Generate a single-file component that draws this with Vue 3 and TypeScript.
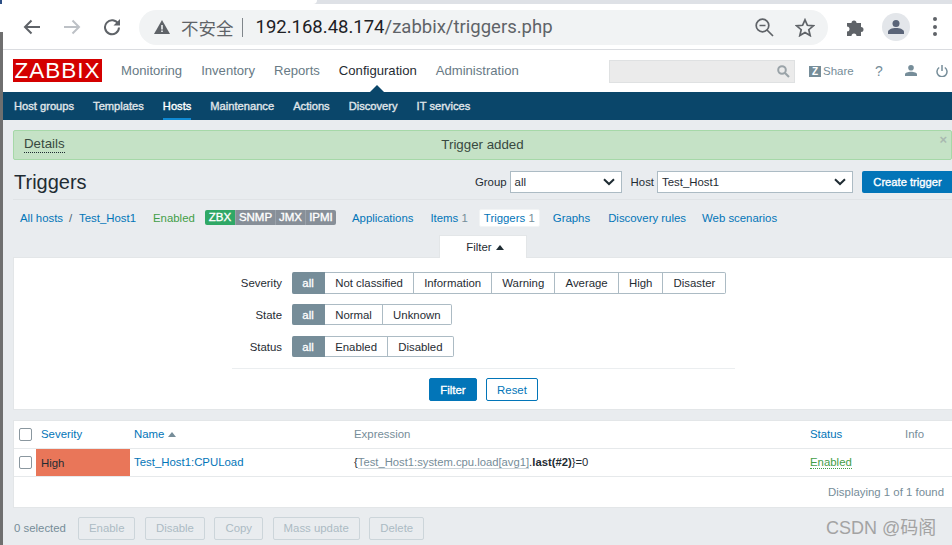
<script setup lang="ts">
const mainNav = ['Monitoring', 'Inventory', 'Reports', 'Configuration', 'Administration']
const subNav = ['Host groups', 'Templates', 'Hosts', 'Maintenance', 'Actions', 'Discovery', 'IT services']
const filters = [
  { label: 'Severity', cls: 'first', options: ['Not classified', 'Information', 'Warning', 'Average', 'High', 'Disaster'] },
  { label: 'State', cls: '', options: ['Normal', 'Unknown'] },
  { label: 'Status', cls: '', options: ['Enabled', 'Disabled'] },
]
const actions = ['Enable', 'Disable', 'Copy', 'Mass update', 'Delete']
</script>

<template>
  <div class="screen">
    <div class="tabstrip"><div class="tabstrip-blue"></div><div class="tabstrip-tab"></div></div>
    <div class="browser">
      <div class="toolbar">
        <svg class="ic back" viewBox="0 0 18 16" width="18" height="16"><path d="M17 8H2M8.5 1.5 2 8l6.5 6.5" fill="none" stroke="#5f6368" stroke-width="2"/></svg>
        <svg class="ic fwd" viewBox="0 0 18 16" width="18" height="16"><path d="M1 8h15M9.5 1.5 16 8l-6.5 6.5" fill="none" stroke="#bdc1c6" stroke-width="2"/></svg>
        <svg class="ic reload" viewBox="0 0 18 18" width="18" height="18"><path d="M15.2 6A7 7 0 1 0 16 9.5" fill="none" stroke="#5f6368" stroke-width="2"/><path d="M17 1v6.5h-6.500z" fill="#5f6368"/></svg>
        <div class="omnibox">
          <svg class="warn" viewBox="0 0 16 14" width="16" height="14"><path d="M8 0 16 14H0z" fill="#5f6368"/><path d="M7.200 5h1.600v4.500H7.200zM7.200 10.500h1.600V12H7.200z" fill="#f1f3f4"/></svg>
          <span class="insecure">不安全</span>
          <span class="pipe"></span>
          <span class="url"><span class="host">192.168.48.174</span>/zabbix/triggers.php</span>
          <svg class="zoomout" viewBox="0 0 19 19" width="19" height="19"><circle cx="7.500" cy="7.500" r="6.300" fill="none" stroke="#5f6368" stroke-width="1.700"/><path d="M4.500 7.500h6M12 12l6 6" stroke="#5f6368" stroke-width="1.700"/></svg>
          <svg class="star" viewBox="0 0 20 19" width="20" height="19"><path d="M10 1.800l2.400 5.500 6 .5-4.600 3.900 1.400 5.900-5.200-3.100-5.200 3.100 1.400-5.900L1.600 7.800l6-.5z" fill="none" stroke="#5f6368" stroke-width="1.700"/></svg>
        </div>
        <svg class="puzzle" viewBox="0 0 20 20" width="20" height="20"><path d="M1 6h4.500a2.500 2.500 0 1 1 5 0H15v4a2.500 2.500 0 1 1 0 5v4h-4.500a2.500 2.500 0 0 0-5 0H1v-4.500a2.500 2.500 0 0 0 0-5z" fill="#5f6368"/></svg>
        <div class="avatar"><svg viewBox="0 0 16 14" width="16" height="14"><circle cx="8" cy="3.500" r="3.500" fill="#5a6478"/><path d="M0 14v-2c0-2.500 4-4 8-4s8 1.500 8 4v2z" fill="#5a6478"/></svg></div>
        <div class="dots"><i></i><i></i><i></i></div>
      </div>
    </div>

    <header class="topbar">
      <div class="logo">ZABBIX</div>
      <nav class="mainnav">
        <span v-for="n in mainNav" :key="n" :class="{ active: n === 'Configuration' }">{{ n }}</span>
      </nav>
      <div class="search">
        <svg viewBox="0 0 13 13" width="13" height="13"><circle cx="5" cy="5" r="3.800" fill="none" stroke="#9aa3a8" stroke-width="2"/><path d="M8 8l4 4" stroke="#9aa3a8" stroke-width="2.200"/></svg>
      </div>
      <div class="share"><span class="zbox">Z</span>Share</div>
      <span class="help">?</span>
      <svg class="person" viewBox="0 0 12 11" width="12" height="11"><circle cx="6" cy="2.800" r="2.800" fill="#768d99"/><path d="M0 11V9.500C0 7.800 3 6.800 6 6.800s6 1 6 2.700V11z" fill="#768d99"/></svg>
      <svg class="power" viewBox="0 0 12 12" width="12" height="12"><path d="M3.200 2.500a5 5 0 1 0 5.600 0" fill="none" stroke="#768d99" stroke-width="1.500"/><path d="M6 0v6" stroke="#768d99" stroke-width="1.500"/></svg>
      <span class="caret"></span>
    </header>
    <nav class="subnav">
      <span v-for="n in subNav" :key="n" :class="{ current: n === 'Hosts' }">{{ n }}</span>
    </nav>

    <main class="page">
      <div class="message">
        <span class="details">Details</span>
        <span class="msg-text">Trigger added</span>
        <span class="close">×</span>
      </div>

      <div class="titlebar">
        <h1>Triggers</h1>
        <div class="controls">
          <label>Group</label>
          <div class="select group">all<svg viewBox="0 0 12 8" width="12" height="8"><path d="M1 1.200 6 6l5-4.800" fill="none" stroke="#1f2c33" stroke-width="2"/></svg></div>
          <label class="hostlabel">Host</label>
          <div class="select hostsel">Test_Host1<svg viewBox="0 0 12 8" width="12" height="8"><path d="M1 1.200 6 6l5-4.800" fill="none" stroke="#1f2c33" stroke-width="2"/></svg></div>
          <button class="create">Create trigger</button>
        </div>
      </div>

      <div class="hostnav">
        <a class="allhosts">All hosts</a><span class="slash">/</span><a class="hostname">Test_Host1</a>
        <span class="enabled">Enabled</span>
        <div class="badges"><b class="zbx">ZBX</b><b class="snmp">SNMP</b><b class="jmx">JMX</b><b class="ipmi">IPMI</b></div>
        <a class="l-apps">Applications</a>
        <a class="l-items">Items <em>1</em></a>
        <a class="l-trig">Triggers <em>1</em></a>
        <a class="l-graphs">Graphs</a>
        <a class="l-disc">Discovery rules</a>
        <a class="l-web">Web scenarios</a>
      </div>

      <div class="filter-tab-row"><div class="filter-tab">Filter <span class="tri"></span></div></div>
      <section class="filter">
        <div v-for="f in filters" :key="f.label" class="frow" :class="f.cls">
          <span class="flabel">{{ f.label }}</span>
          <div class="seg">
            <span class="on">all</span>
            <span v-for="o in f.options" :key="o">{{ o }}</span>
          </div>
        </div>
        <hr />
        <div class="fbtns">
          <button class="primary">Filter</button>
          <button class="ghost">Reset</button>
        </div>
      </section>

      <section class="list">
        <div class="row head">
          <span class="cb"><i></i></span>
          <a class="c-sev">Severity</a>
          <a class="c-name">Name <span class="sort"></span></a>
          <span class="c-expr">Expression</span>
          <a class="c-status">Status</a>
          <span class="c-info">Info</span>
        </div>
        <div class="row body">
          <span class="cb"><i></i></span>
          <span class="c-sev high">High</span>
          <a class="c-name">Test_Host1:CPULoad</a>
          <span class="c-expr val">{<u>Test_Host1:system.cpu.load[avg1]</u>.<b>last(#2)</b>}=0</span>
          <span class="c-status en">Enabled</span>
          <span class="c-info"></span>
        </div>
        <div class="found">Displaying 1 of 1 found</div>
      </section>

      <div class="bulk">
        <span class="sel">0 selected</span>
        <button v-for="a in actions" :key="a">{{ a }}</button>
      </div>
    </main>

    <div class="watermark">CSDN @码阁</div>
    <div class="leftedge"></div>
  </div>
</template>

<style>
html, body { margin: 0; overflow: hidden; }
</style>

<style scoped>
.screen { position: relative; width: 952px; height: 545px; overflow: hidden; background: #e9ecef; font-family: "Liberation Sans", Arial, sans-serif; font-size: 11.400px; color: #1f2c33; }
a { color: #0275b8; }
.leftedge { position: absolute; left: 0; top: 32px; bottom: 0; width: 3px; background: #6f6f6f; }
.tabstrip { height: 4px; background: #dee1e6; display: flex; }
.tabstrip-blue { width: 2px; background: #2d4f85; }
.tabstrip-tab { width: 315px; background: #fff; border-bottom-right-radius: 6px; }
.browser { background: #fff; height: 45px; border-bottom: 1px solid #dadce0; }
.toolbar { display: flex; align-items: center; height: 45px; position: relative; }
.ic.back { margin-left: 23px; }
.ic.fwd { margin-left: 22px; }
.ic.reload { margin-left: 22px; }
.omnibox { margin-left: 18px; width: 689px; height: 35px; margin-top: 1px; background: #f1f3f4; border-radius: 18px; display: flex; align-items: center; }
.warn { margin-left: 15px; }
.insecure { margin-left: 11px; font-family: "Noto Sans CJK SC", sans-serif; font-size: 17.500px; color: #5f6368; }
.pipe { width: 1px; height: 19px; background: #80868b; margin-left: 8px; }
.url { margin-left: 13px; font-family: "Roboto", "Liberation Sans", sans-serif; font-size: 18.500px; color: #5f6368; flex: 1; }
.host { color: #202124; }
.zoomout { margin-right: 21px; }
.star { margin-right: 13px; }
.puzzle { margin-left: 18px; }
.avatar { width: 28px; height: 28px; border-radius: 50%; background: #e3e6ea; margin-left: 16px; display: flex; align-items: center; justify-content: center; }
.dots { margin-left: 23px; display: flex; flex-direction: column; gap: 3.500px; }
.dots i { width: 4px; height: 4px; border-radius: 50%; background: #5f6368; display: block; }

.topbar { height: 42px; background: #fff; display: flex; align-items: center; position: relative; }
.logo { margin-left: 13px; width: 89px; height: 23px; background: #d40000; color: #fff; font-size: 22.500px; line-height: 24px; text-align: center; letter-spacing: 1px; margin-top: -1px; }
.mainnav { display: flex; gap: 19px; margin-left: 19px; font-size: 13.100px; color: #687a85; margin-top: -2px; }
.mainnav .active { color: #1f2c33; }
.search { position: absolute; left: 609px; top: 10px; width: 184px; height: 21px; box-sizing: content-box; background: #ebebeb; border: 1px solid #dfe1e2; display: flex; align-items: center; justify-content: flex-end; }
.search svg { margin-right: 4px; }
.share { position: absolute; left: 809px; top: 15px; display: flex; align-items: center; color: #768d99; font-size: 11.500px; }
.zbox { width: 12px; height: 11px; background: #768d99; color: #fff; font-weight: bold; font-size: 10px; line-height: 11px; text-align: center; margin-right: 2px; }
.help { position: absolute; left: 875px; top: 13px; color: #768d99; font-size: 14px; }
.person { position: absolute; left: 905px; top: 15px; }
.power { position: absolute; left: 936px; top: 15px; }
.caret { position: absolute; left: 370px; bottom: 0; width: 0; height: 0; border-left: 7px solid transparent; border-right: 7px solid transparent; border-bottom: 7px solid #0a466a; }

.subnav { height: 28px; background: #0a466a; display: flex; gap: 19px; padding-left: 14px; align-items: stretch; color: #e0e6ea; font-size: 11.150px; -webkit-text-stroke: 0.35px currentColor; line-height: 29px; }
.subnav span { box-sizing: border-box; }
.subnav .current { color: #fff; border-bottom: 2px solid #0f8ad4; }

.page { height: 425px; padding-left: 13px; padding-top: 10px; box-sizing: border-box; }
.message { height: 30px; box-sizing: border-box; background: #c5e2c6; border: 1px solid #a6d8a8; border-radius: 2px; position: relative; display: flex; align-items: center; justify-content: center; font-size: 13.300px; color: #38493f; padding-bottom: 2px; }
.details { position: absolute; left: 10px; top: 4px; line-height: 17px; border-bottom: 1px dotted #1f2c33; }
.close { position: absolute; right: 4px; top: 0; color: #a9b9b0; font-size: 13px; line-height: 17px; font-weight: bold; }

.titlebar { height: 40px; display: flex; align-items: center; justify-content: space-between; border-bottom: 1px solid #e0e3e6; box-sizing: border-box; padding-top: 4px; }
h1 { margin: 2px 0 0 1px; font-weight: normal; font-size: 20px; color: #1f2c33; }
.controls { display: flex; align-items: center; }
.controls label { margin-right: 3px; }
.hostlabel { margin-left: 9px; }
.select { height: 22px; box-sizing: border-box; background: #fff; border: 1px solid #acbbc4; display: flex; align-items: center; justify-content: space-between; padding: 0 6px 0 4px; }
.select.group { width: 112px; }
.select.hostsel { width: 196px; }
.create { margin-left: 9px; width: 90px; height: 22px; border: 0; border-radius: 2px 0 0 2px; background: #0275b8; color: #fff; font: 11.200px "Liberation Sans", Arial, sans-serif; -webkit-text-stroke: 0.35px #fff; padding: 0 0 0 1px; }

.hostnav { height: 35px; display: flex; align-items: center; position: relative; }
.hostnav em { font-style: normal; color: #768d99; }
.allhosts { margin-left: 7px; width: 42px; white-space: nowrap; }
.slash { margin-left: 7px; width: 3px; color: #4b6575; }
.hostname { margin-left: 7px; width: 55px; white-space: nowrap; }
.enabled { margin-left: 19px; width: 41px; color: #429e47; }
.badges { margin-left: 11px; display: flex; width: 131px; height: 15px; border-radius: 2px; overflow: hidden; font-size: 11.500px; line-height: 15px; color: #fff; text-align: center; }
.badges b { background: #878f98; border-left: 1px solid #9aa2aa; box-sizing: border-box; font-weight: normal; -webkit-text-stroke: 0.35px #fff; }
.zbx { width: 30px; background: #2fa866 !important; border: 0 !important; }
.snmp { width: 40px; }
.jmx { width: 30px; }
.ipmi { width: 31px; }
.hostnav a { white-space: nowrap; }
.l-apps { margin-left: 16px; }
.l-items { margin-left: 17px; }
.l-trig { margin-left: 11px; width: 61px; text-align: center; background: #fff; padding: 1px 0; line-height: 14px; border: 1px solid #f2f4f5; border-radius: 2px; box-sizing: border-box; }
.l-graphs { margin-left: 13px; }
.l-disc { margin-left: 18px; }
.l-web { margin-left: 16px; }

.filter-tab-row { height: 22px; padding-left: 426px; }
.filter-tab { width: 88px; height: 23px; box-sizing: border-box; background: #fff; border: 1px solid #e3e6e8; border-bottom: 0; padding-left: 4px; text-align: center; line-height: 23px; position: relative; z-index: 1; }
.tri { display: inline-block; width: 0; height: 0; border-left: 4px solid transparent; border-right: 4px solid transparent; border-bottom: 5px solid #1f2c33; margin-left: 1px; vertical-align: 1px; }

.filter { height: 153px; box-sizing: border-box; background: #fff; border: 1px solid #e3e6e8; border-right: 0; padding-top: 14px; }
.frow { display: flex; align-items: center; height: 21px; margin-bottom: 11px; }
.frow.first { height: 22px; margin-bottom: 10px; }
.flabel { width: 268px; text-align: right; margin-right: 10px; }
.seg { display: flex; height: 100%; border-radius: 2px; }
.seg span { box-sizing: border-box; border: 1px solid #acbbc4; border-left: 0; display: flex; align-items: center; padding: 0 10px 0 10.200px; }
.seg span:last-child { border-radius: 0 2px 2px 0; }
.seg .on { width: 33px; padding: 0; justify-content: center; background: #768d99; border-color: #768d99; color: #fff; border-radius: 2px 0 0 2px; -webkit-text-stroke: 0.3px #fff; }
.filter hr { margin: 0 0 9px 218px; width: 503px; border: 0; border-top: 1px solid #ebeef0; height: 0; }
.fbtns { display: flex; gap: 9px; padding-left: 415px; }
.fbtns button { height: 23px; box-sizing: border-box; border-radius: 2px; font: 11.400px "Liberation Sans", Arial, sans-serif; padding: 0; }
.primary { width: 48px; background: #0275b8; border: 1px solid #0275b8; color: #fff; -webkit-text-stroke: 0.35px #fff; }
.ghost { width: 52px; background: #fff; border: 1px solid #0275b8; color: #0275b8; }

.list { margin-top: 10px; height: 88px; box-sizing: border-box; background: #fff; border: 1px solid #e3e6e8; border-right: 0; }
.row { display: grid; grid-template-columns: 22px 94px 224px 456px 95px 1fr; height: 28px; box-sizing: border-box; border-bottom: 1px solid #e6e9eb; align-items: center; padding-bottom: 1px; }
.row.head { color: #768d99; }
.cb { display: flex; padding-left: 5px; }
.cb i { width: 11px; height: 11px; border: 1px solid #8a979f; border-radius: 2px; background: #fff; display: block; }
.c-sev { padding-left: 5px; }
.c-name { padding-left: 4px; }
.c-status { padding-left: 0; }
.high { background: #e97659; align-self: stretch; margin-bottom: -1px; display: flex; align-items: center; color: #1f2c33; }
.sort { display: inline-block; width: 0; height: 0; border-left: 4px solid transparent; border-right: 4px solid transparent; border-bottom: 5px solid #768d99; vertical-align: 1px; }
.val { font-size: 11.250px; }
.val u { color: #768d99; text-decoration: none; border-bottom: 1px solid #ccd5da; }
.val b { font-weight: bold; }
.en { color: #429e47; justify-self: start; border-bottom: 1px dotted #429e47; }
.found { height: 30px; line-height: 30px; text-align: right; padding-right: 8px; color: #768d99; }

.bulk { height: 37px; display: flex; align-items: center; padding-top: 3px; box-sizing: border-box; color: #768d99; }
.sel { width: 65px; padding-left: 1px; box-sizing: border-box; }
.bulk button { height: 23px; box-sizing: border-box; background: transparent; border: 1px solid #ccd5da; border-radius: 2px; color: #acbbc4; font: 11.400px "Liberation Sans", Arial, sans-serif; padding: 0 10px; margin-right: 9.500px; }

.watermark { position: absolute; left: 826px; top: 513px; font-size: 18px; color: #a3a3a3; font-family: "Liberation Sans", "Noto Sans CJK SC", sans-serif; white-space: nowrap; }
</style>
